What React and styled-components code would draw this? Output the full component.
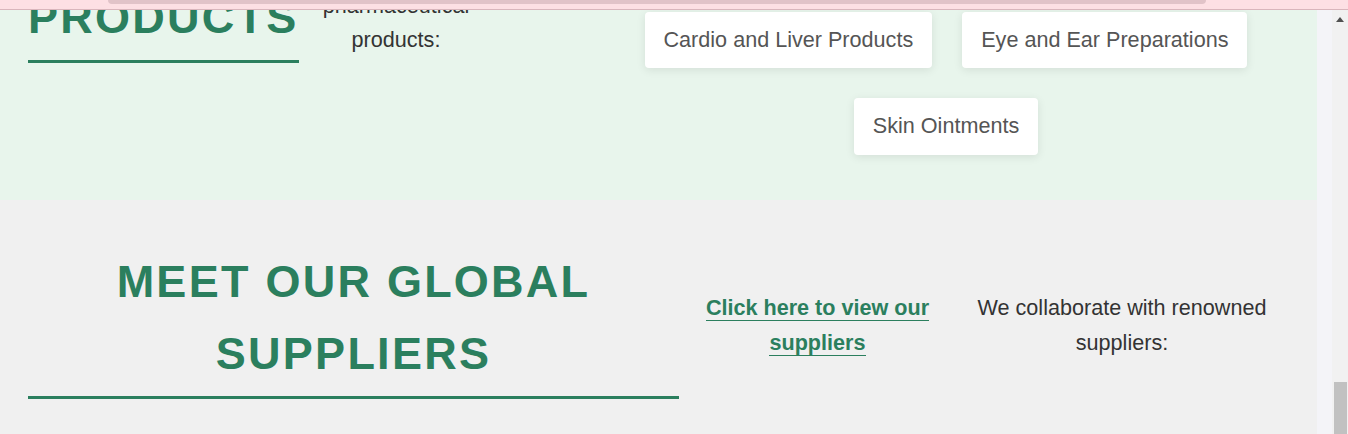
import React from "react";
import styled, { createGlobalStyle } from "styled-components";

const GREEN = "#2b7f5e";

const GlobalStyle = createGlobalStyle`
  html, body {
    margin: 0;
    padding: 0;
    height: 434px;
    overflow: hidden;
    background: #f4f4f8;
    font-family: "Liberation Sans", Arial, sans-serif;
  }
  * { box-sizing: border-box; }
`;

const Screen = styled.div`
  display: flex;
  height: 434px;
  overflow: hidden;
`;

const Main = styled.main`
  width: 1317px;
  flex: none;
  display: flex;
  flex-direction: column;
`;

const Gutter = styled.div`
  width: 15px;
  flex: none;
  background: #f4f4f8;
`;

const ScrollTrack = styled.div`
  width: 16px;
  flex: none;
  background: #f1f1f1;
  display: flex;
  flex-direction: column;
  justify-content: space-between;
  align-items: center;
  padding-top: 17px;
`;

const ScrollThumb = styled.div`
  width: 13px;
  height: 52px;
  margin-left: 2px;
  align-self: flex-start;
  background: #c1c1c1;
`;

const TopBar = styled.header`
  position: fixed;
  top: 0;
  left: 0;
  right: 0;
  height: 10px;
  background: #fde0e4;
  border-bottom: 1px solid #d9b6bc;
  z-index: 10;
`;

const TopBarPill = styled.div`
  margin-left: 108px;
  width: 1098px;
  height: 4px;
  background: #e1c3c8;
  border-radius: 0 0 8px 8px;
`;

const ProductsSection = styled.section`
  height: 200px;
  flex: none;
  overflow: hidden;
  background: #e8f5ec;
  display: flex;
  align-items: flex-end;
  padding: 0 28px 45px;
`;

const SectionTitle = styled.h2`
  margin: 0 0 ${(p) => p.$lift || 0}px;
  flex: none;
  width: ${(p) => p.$width || "auto"};
  font-size: 45px;
  line-height: 72px;
  font-weight: 700;
  letter-spacing: 0.05em;
  text-transform: uppercase;
  text-align: center;
  color: ${GREEN};
  padding-bottom: 6px;
  border-bottom: 3px solid ${GREEN};
`;

const Lead = styled.p`
  margin: 0 0 97px 22.5px;
  width: 150px;
  flex: none;
  text-align: center;
  font-size: 21.6px;
  line-height: 1.6;
  color: #333;
`;

const CardGrid = styled.div`
  width: 686px;
  margin-left: auto;
  display: flex;
  flex-wrap: wrap;
  justify-content: center;
  gap: 30px;
`;

const ProductCard = styled.div`
  background: #fff;
  padding: 11px 19px;
  border-radius: 4px;
  box-shadow: 0 2px 10px rgba(0, 0, 0, 0.09);
  font-size: 21.6px;
  line-height: 34.56px;
  color: #555;
  white-space: nowrap;
`;

const SuppliersSection = styled.section`
  flex: 1;
  background: #f0f0f0;
  display: grid;
  grid-template-columns: 651px 226px 332px;
  column-gap: 25.5px;
  align-items: center;
  align-content: start;
  padding: 46px 28px 0;
`;

const ColumnText = styled.p`
  margin: 6.6px 0 0;
  text-align: center;
  font-size: 21.6px;
  line-height: 1.6;
  color: #333;
`;

const SupplierLink = styled.a`
  color: ${GREEN};
  font-weight: 700;
  text-decoration: none;
  border-bottom: 1px solid ${GREEN};
  cursor: pointer;
`;

const ArrowUp = () => (
  <svg width="8" height="5" viewBox="0 0 8 5" aria-hidden="true">
    <path d="M0 5 L4 0 L8 5 Z" fill="#505050" />
  </svg>
);

const products = [
  "Cardio and Liver Products",
  "Eye and Ear Preparations",
  "Skin Ointments",
];

export default function App() {
  return (
    <>
      <GlobalStyle />
      <TopBar>
        <TopBarPill />
      </TopBar>
      <Screen>
        <Main>
          <ProductsSection>
            <SectionTitle $width="min-content" $lift={92}>
              Our Products
            </SectionTitle>
            <Lead>Explore our wide range of pharmaceutical products:</Lead>
            <CardGrid>
              {products.map((p) => (
                <ProductCard key={p}>{p}</ProductCard>
              ))}
            </CardGrid>
          </ProductsSection>
          <SuppliersSection>
            <SectionTitle>Meet Our Global Suppliers</SectionTitle>
            <ColumnText>
              <SupplierLink href="#suppliers">
                Click here to view our suppliers
              </SupplierLink>
            </ColumnText>
            <ColumnText>We collaborate with renowned suppliers:</ColumnText>
          </SuppliersSection>
        </Main>
        <Gutter />
        <ScrollTrack>
          <ArrowUp />
          <ScrollThumb />
        </ScrollTrack>
      </Screen>
    </>
  );
}
